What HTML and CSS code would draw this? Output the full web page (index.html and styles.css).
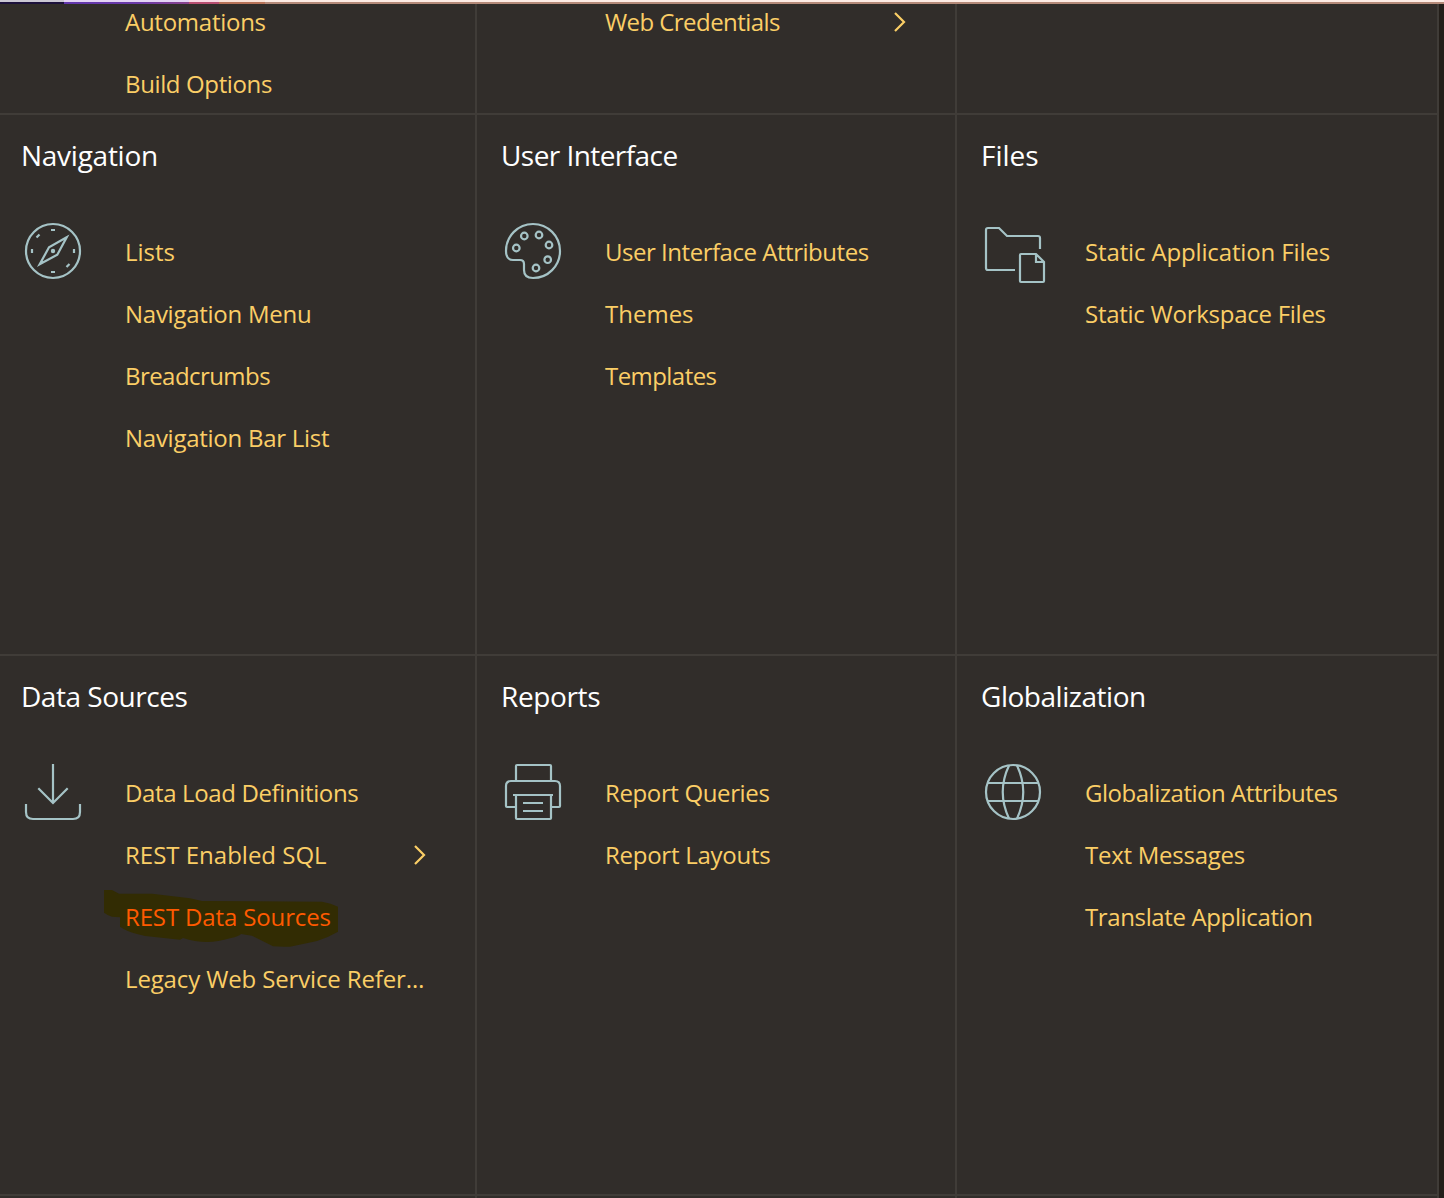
FILE: index.html
```html
<!DOCTYPE html>
<html lang="en">
<head>
<meta charset="utf-8">
<title>Shared Components</title>
<link rel="stylesheet" href="styles.css">
</head>
<body>
<div class="topbar"><i class="seg navy"></i><i class="seg purple"></i><i class="seg pink"></i><i class="seg copper"></i><i class="seg sand"></i></div>
<main class="grid">
  <section class="cell partial">
    <ul class="links"><li><a class="k2">Automations</a></li><li><a class="k3">Build Options</a></li></ul>
  </section>
  <section class="cell partial">
    <ul class="links"><li><a class="k5">Web Credentials</a><svg class="chevron" viewBox="0 0 12 20"><path d="M1 1l9 9-9 9"/></svg></li></ul>
  </section>
  <section class="cell partial"></section>

  <section class="cell">
    <h2 class="k2">Navigation</h2>
    <div class="body">
      <svg class="icon" viewBox="0 0 64 64"><circle cx="32" cy="32" r="27"/><path d="M45.7 18.3L28 28.3 18.7 45.3 36.3 35.7zM30 11h4M30 53h4M11 30v4M53 30v4M15.5 18.5l3-3M45.5 48l3-3"/><circle class="dot" cx="32" cy="32" r="2.2"/></svg>
      <ul class="links"><li><a>Lists</a></li><li><a class="k2">Navigation Menu</a></li><li><a class="k5">Breadcrumbs</a></li><li><a class="k2">Navigation Bar List</a></li></ul>
    </div>
  </section>
  <section class="cell">
    <h2 class="k5">User Interface</h2>
    <div class="body">
      <svg class="icon" viewBox="0 0 64 64"><path d="M5 32C5 17 17 5 32 5s27 12 27 27-12 27-27 27c-6 0-9-3-9-8v-6q0-4-4-4h-7c-5 0-7-4-7-9z"/><circle cx="23.3" cy="17" r="3.3"/><circle cx="38" cy="16" r="3.3"/><circle cx="48" cy="26" r="3.3"/><circle cx="46.7" cy="40.7" r="3.3"/><circle cx="35" cy="49" r="3.3"/><circle cx="15.3" cy="29" r="3.3"/></svg>
      <ul class="links"><li><a class="k4">User Interface Attributes</a></li><li><a>Themes</a></li><li><a class="k5">Templates</a></li></ul>
    </div>
  </section>
  <section class="cell">
    <h2>Files</h2>
    <div class="body">
      <svg class="icon" viewBox="0 0 64 64"><path d="M34 51H7q-2 0-2-2V11q0-2 2-2h11l8 8h31q2 0 2 2v11M40 35h15l8 8v19q0 1-1 1H40q-1 0-1-1V36q0-1 1-1zM55 35v8h8"/></svg>
      <ul class="links"><li><a class="k1">Static Application Files</a></li><li><a class="k2">Static Workspace Files</a></li></ul>
    </div>
  </section>

  <section class="cell">
    <h2 class="k4">Data Sources</h2>
    <div class="body">
      <svg class="icon" viewBox="0 0 64 64"><path d="M32 4v39M17.3 28.3L32 43l14.7-14.7M5 44v8q0 7 7 7h40q7 0 7-7v-8"/></svg>
      <ul class="links"><li><a class="k3">Data Load Definitions</a></li><li><a>REST Enabled SQL</a><svg class="chevron" viewBox="0 0 12 20"><path d="M1 1l9 9-9 9"/></svg></li>
      <li class="marked"><svg class="marker" viewBox="0 0 234 57"><path d="M0 0H8L15 3.7H48L86 8.3 98 11 218 11.7Q227 13 234 16.7V41.7Q225 47 213 51L186 56.7Q176 57 169 56.3L148 45.7 137 44Q136 46 126 48.3 114 52 103 52 91 52 79 48L76 49.7 53 47.3Q42 47 33 44 22 41 16 36.7V27.3L8 26.7Q3 25 0 22.7z"/></svg><a class="k1">REST Data Sources</a></li>
      <li><a class="k1">Legacy Web Service Refer…</a></li></ul>
    </div>
  </section>
  <section class="cell">
    <h2 class="k3">Reports</h2>
    <div class="body">
      <svg class="icon" viewBox="0 0 64 64"><path d="M15 21V6q0-1 1-1h33q1 0 1 1v15M15 47H6q-1 0-1-1V26q0-5 5-5h44q5 0 5 5v20q0 1-1 1h-8M12 35h40M15 35v23q0 1 1 1h33q1 0 1-1V35M22 43h20M22 51h20"/></svg>
      <ul class="links"><li><a class="k3">Report Queries</a></li><li><a class="k2">Report Layouts</a></li></ul>
    </div>
  </section>
  <section class="cell">
    <h2 class="k4">Globalization</h2>
    <div class="body">
      <svg class="icon" viewBox="0 0 64 64"><circle cx="32" cy="32" r="27"/><path d="M28 5.5Q15.500 32 28 58.500M36 5.500Q48.500 32 36 58.500M7 23h50M7 41h50"/></svg>
      <ul class="links"><li><a class="k4">Globalization Attributes</a></li><li><a class="k2">Text Messages</a></li><li><a class="k3">Translate Application</a></li></ul>
    </div>
  </section>
  <div class="under"></div><div class="under"></div><div class="under"></div>
</main>
</body>
</html>
```
FILE: styles.css
```css
* { box-sizing: border-box; }
body { margin: 0; height: 1198px; overflow: hidden; background: #231e19; font-family: "Open Sans", "Noto Sans", sans-serif; }
.topbar { display: flex; height: 4px; }
.seg { height: 4px; border-top: 2px solid; }
.navy { width: 64px; background: #1d123c; border-color: #cbc8d4; }
.purple { width: 125px; background: linear-gradient(90deg, #6236ad, #6b3aa8 60%, #8a438c); border-color: #e4d5f5; }
.pink { width: 30px; background: #b84e70; border-color: #fadae4; }
.copper { width: 46px; background: #b87358; border-color: #fbe3d9; }
.sand { flex: 1; background: #b58a79; border-color: #fdece5; }
.grid { display: grid; width: 1439px; grid-template-columns: 477px 480px 482px; grid-template-rows: 111px 541px 540px 2px; }
.cell { min-width: 0; padding: 17px 24px 0; background: #312d2a; border-right: 2px solid #403c38; border-bottom: 2px solid #403c38; }
.cell:nth-child(3n+1) { padding-left: 21px; }
.under { background: #312d2a; border-right: 2px solid #403c38; }
h2 { margin: 0; height: 46px; line-height: 46px; font-size: 28px; font-weight: 430; font-stretch: 92.5%; color: #fff; white-space: nowrap; }
.body { display: flex; gap: 40px; padding-top: 41px; }
.icon { flex: none; width: 64px; height: 64px; overflow: visible; fill: none; stroke: #a5c3c6; stroke-width: 2.2; }
.icon .dot { fill: #a5c3c6; stroke: none; }
.links { flex: 1; min-width: 0; margin: 2px 0 0; padding: 0; list-style: none; }
.partial { padding-top: 0; }
.partial .links { margin: -13px 0 0 104px; }
.links li { position: relative; display: flex; align-items: center; justify-content: space-between; width: 301px; height: 62px; font-size: 24px; line-height: 34px; color: #fbce66; white-space: nowrap; }
.links a { position: relative; font-weight: 430; font-stretch: 92.5%; }
.chevron { width: 12px; height: 20px; fill: none; stroke: #fbce66; stroke-width: 2.2; }
.marker { position: absolute; left: -21px; top: 4px; width: 234px; height: 57px; fill: #322c03; }
.links .marked a { color: #ff5a00; }

/* tracking steps */
.k1 { letter-spacing: -.14px; }
.k2 { letter-spacing: -.26px; }
.k3 { letter-spacing: -.37px; }
.k4 { letter-spacing: -.47px; }
.k5 { letter-spacing: -.56px; }
```
